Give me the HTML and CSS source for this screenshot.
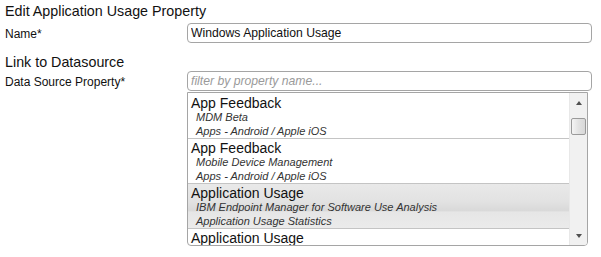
FILE: index.html
```html
<!DOCTYPE html>
<html>
<head>
<meta charset="utf-8">
<link rel="stylesheet" href="styles.css">
</head>
<body>
<div class="page">
  <div class="heading">Edit Application Usage Property</div>
  <div class="row name-row">
    <label class="label">Name*</label>
    <div class="field"><input class="input" type="text" value="Windows Application Usage"></div>
  </div>
  <div class="heading heading-2">Link to Datasource</div>
  <div class="row">
    <label class="label label-ds">Data Source Property*</label>
    <div class="field">
      <input class="input filter" type="text" placeholder="filter by property name...">
      <div class="listbox">
        <div class="items">
          <div class="item">
            <div class="item-title">App Feedback</div>
            <div class="item-sub">MDM Beta</div>
            <div class="item-sub">Apps - Android / Apple iOS</div>
          </div>
          <div class="item">
            <div class="item-title">App Feedback</div>
            <div class="item-sub">Mobile Device Management</div>
            <div class="item-sub">Apps - Android / Apple iOS</div>
          </div>
          <div class="item selected">
            <div class="item-title">Application Usage</div>
            <div class="item-sub">IBM Endpoint Manager for Software Use Analysis</div>
            <div class="item-sub">Application Usage Statistics</div>
          </div>
          <div class="item">
            <div class="item-title">Application Usage</div>
          </div>
        </div>
        <div class="scrollbar">
          <div class="arrow up"></div>
          <div class="thumb"></div>
          <div class="track"></div>
          <div class="arrow down"></div>
        </div>
      </div>
    </div>
  </div>
</div>
</body>
</html>
```
FILE: styles.css
```css
html, body {
  margin: 0;
  padding: 0;
  background: #ffffff;
}
body {
  font-family: "Liberation Sans", Arial, sans-serif;
  color: #111;
}
.page {
  padding: 2px 9px 0 5px;
}
.heading {
  font-size: 14.3px;
  line-height: 18px;
  height: 19px;
  color: #111;
}
.heading-2 {
  margin-top: 9px;
  height: 18px;
}
.row {
  display: flex;
  align-items: flex-start;
}
.name-row {
  margin-top: 2px;
}
.label {
  width: 182px;
  flex: none;
  font-size: 12px;
  line-height: 20px;
  padding-top: 1px;
  color: #111;
}
.field {
  flex: 1;
  display: flex;
  flex-direction: column;
}
.input {
  box-sizing: border-box;
  width: 405px;
  height: 20px;
  margin: 0;
  border: 1px solid #a5a5a5;
  border-radius: 4px;
  padding: 0 4px 0 3px;
  font-family: "Liberation Sans", Arial, sans-serif;
  font-size: 12.2px;
  color: #111;
  background: #fff;
  outline: none;
}
.filter::placeholder {
  color: #9a9a9a;
  font-style: italic;
}
.listbox {
  box-sizing: border-box;
  width: 401px;
  height: 154px;
  margin-top: 1px;
  border: 1px solid #a5a5a5;
  border-radius: 0 0 4px 4px;
  display: flex;
  overflow: hidden;
}
.items {
  flex: 1;
  overflow: hidden;
}
.item {
  border-bottom: 1px solid #c4c4c4;
  padding: 2px 0 0 3px;
}
.item:first-child {
  padding-top: 3px;
}
.item-title {
  font-size: 14px;
  line-height: 14px;
  height: 14px;
  color: #111;
}
.item-sub {
  font-size: 11px;
  line-height: 14px;
  font-style: italic;
  color: #333;
  padding-left: 5px;
}
.selected {
  background: linear-gradient(to bottom, #e9e9e9 0%, #e2e2e2 40%, #d9d9d9 60%, #e6e6e6 64%, #ebebeb 100%);
}
.scrollbar {
  width: 17px;
  flex: none;
  background: #f1f1f1;
  border-left: 1px solid #e8e8e8;
  display: flex;
  flex-direction: column;
  align-items: center;
}
.arrow {
  width: 0;
  height: 0;
  border-left: 3px solid transparent;
  border-right: 3px solid transparent;
}
.arrow.up {
  border-bottom: 4px solid #505050;
  margin-top: 8px;
}
.arrow.down {
  border-top: 4px solid #505050;
  margin-bottom: 7px;
}
.thumb {
  box-sizing: border-box;
  width: 15px;
  height: 17px;
  margin-top: 13px;
  border: 1px solid #9a9a9a;
  border-radius: 2px;
  background: linear-gradient(to right, #f4f4f4, #e2e2e2 50%, #d8d8d8);
}
.track {
  flex: 1;
}
```
